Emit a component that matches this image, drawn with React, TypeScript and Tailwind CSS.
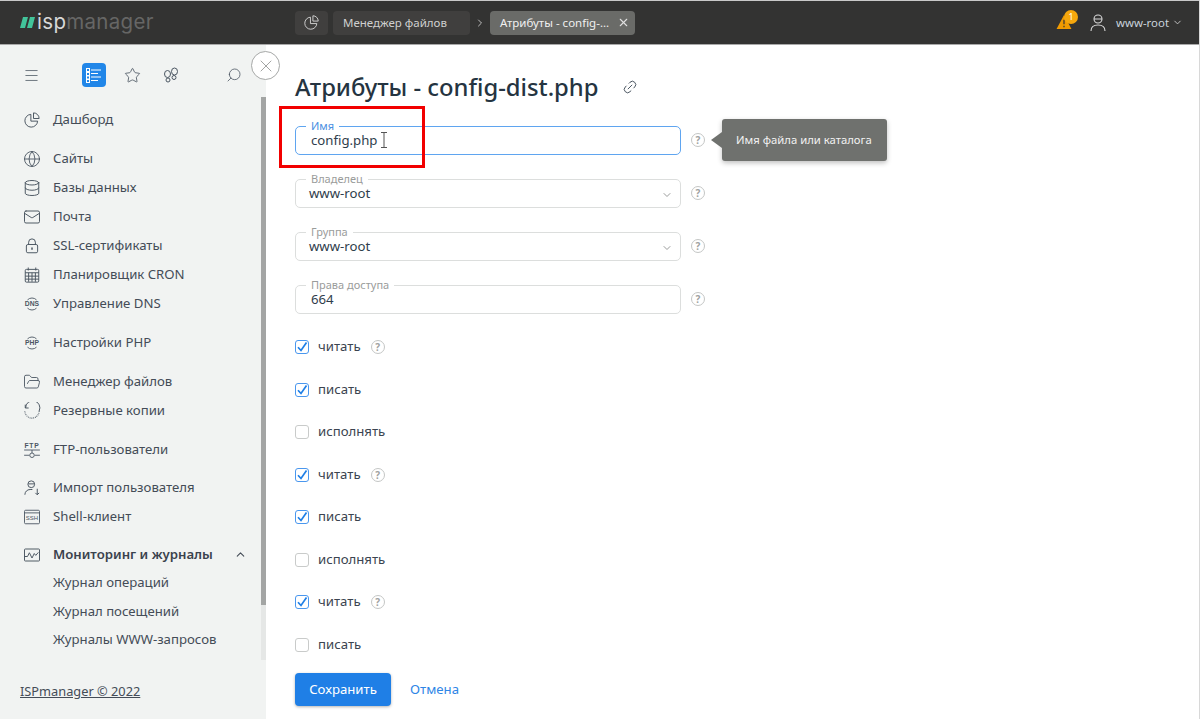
import React from "react";
import { X, ChevronDown, ChevronUp, ChevronRight, Search, Star, Menu, Globe, Database, Mail, FolderOpen, Link2 } from "lucide-react";

const S = ({ children, size = 22, cls = "" }: { children: React.ReactNode; size?: number; cls?: string }) => (
  <svg width={size} height={size} viewBox="0 0 24 24" fill="none" stroke="currentColor" strokeWidth={1.3} className={cls}>{children}</svg>
);

const Pie = ({ size = 18 }: { size?: number }) => (
  <S size={size}><path d="M10.5 4.5a8.5 8.5 0 1 0 9 9h-9z" /><path d="M14 2.5v7.5h7.5a7.5 7.5 0 0 0-7.5-7.5z" /></S>
);
const Lock = () => (
  <S size={18}><path d="M7.5 10V7a4.5 4.5 0 0 1 9 0v3" /><rect x="4.5" y="10" width="15" height="11" rx="2" /><path d="M12 14v3" strokeWidth={2} /></S>
);
const Cal = () => (
  <S size={18}><rect x="3" y="4.5" width="18" height="17" rx="1.5" /><path d="M7 2v4M17 2v4M3 9h18M7.5 9v12M12 9v12M16.5 9v12M3 13.5h18M3 17.5h18" /></S>
);
const Badge = ({ t }: { t: string }) => (
  <svg width="18" height="18" viewBox="0 0 24 24" fill="none" stroke="currentColor" strokeWidth={1.2}>
    <path d="M6 6.5a8.5 8.5 0 0 1 12 0M6 17.5a8.5 8.5 0 0 0 12 0" />
    <text x="12" y="15" textAnchor="middle" fontSize="9" fontWeight="700" fill="currentColor" stroke="none" fontFamily="'Liberation Sans',sans-serif">{t}</text>
  </svg>
);
const Backup = () => (
  <S size={18}><path d="M3.500 8A9.500 9.500 0 1 1 21.500 12" /><path d="M3 3.500V8h4.500" /><path d="M21.500 12a9.500 9.500 0 0 1-19 0" strokeWidth={1.4} strokeDasharray="1.200 1.200" /></S>
);
const Ftp = () => (
  <svg width="18" height="18" viewBox="0 0 24 24" fill="none" stroke="currentColor" strokeWidth={1.2}>
    <text x="12" y="9" textAnchor="middle" fontSize="9" fontWeight="700" fill="currentColor" stroke="none" letterSpacing="1" fontFamily="'Liberation Sans',sans-serif">FTP</text>
    <path d="M1.5 12h21M1.5 19h7M15.5 19h7M12 12v4" /><circle cx="12" cy="19" r="3" />
  </svg>
);
const UserImp = () => (
  <S size={18}><circle cx="11" cy="7" r="4.5" /><path d="M7 6.5h8M2.5 21c0-4 3-7 7-7h3M19 13v8M16.5 18.5 19 21l2.5-2.5" /></S>
);
const Ssh = () => (
  <svg width="18" height="18" viewBox="0 0 24 24" fill="none" stroke="currentColor" strokeWidth={1.2}>
    <rect x="2" y="3" width="20" height="18" rx="1.5" /><path d="M2 6.5h20" />
    <text x="12" y="16.5" textAnchor="middle" fontSize="8" fill="currentColor" stroke="none" fontFamily="'Liberation Sans',sans-serif">SSH</text>
  </svg>
);
const Mon = () => (
  <S size={18}><rect x="2" y="4" width="20" height="16" rx="1" /><path d="M2 14h4l2.5-5 3.5 7 3-6 2 2.5 3.500-4" /></S>
);

const nav: { t: string; i: React.ReactNode; mt?: string; b?: boolean }[] = [
  { t: "Дашборд", i: <Pie /> },
  { t: "Сайты", i: <Globe size={18} strokeWidth={1.2} />, mt: "mt-[10px]" },
  { t: "Базы данных", i: <Database size={18} strokeWidth={1.3} /> },
  { t: "Почта", i: <Mail size={18} strokeWidth={1.3} /> },
  { t: "SSL-сертификаты", i: <Lock /> },
  { t: "Планировщик CRON", i: <Cal /> },
  { t: "Управление DNS", i: <Badge t="DNS" /> },
  { t: "Настройки PHP", i: <Badge t="PHP" />, mt: "mt-[10px]" },
  { t: "Менеджер файлов", i: <FolderOpen size={18} strokeWidth={1.2} />, mt: "mt-[10px]" },
  { t: "Резервные копии", i: <Backup /> },
  { t: "FTP-пользователи", i: <Ftp />, mt: "mt-[10px]" },
  { t: "Импорт пользователя", i: <UserImp />, mt: "mt-[9px]" },
  { t: "Shell-клиент", i: <Ssh /> },
  { t: "Мониторинг и журналы", i: <Mon />, mt: "mt-[9px]", b: true },
];

const Help = () => (
  <span className="w-[14px] h-[14px] rounded-full border-[1.5px] border-[#c4c6c5] text-[#a0a2a1] text-[10px] leading-none font-bold flex items-center justify-center shrink-0">?</span>
);

const Field = ({ label, value, select, indent, mt }: { label: string; value: string; select?: boolean; indent: string; mt: string }) => (
  <div className={`flex items-center ${mt}`}>
    <div className={`relative w-[386px] h-[28.500px] rounded-[5px] border border-[#dcdedd] flex items-center ${indent}`}>
      <span className="absolute -top-[8px] left-[10px] px-[5px] bg-white text-[11px] leading-[14px] text-[#9a9c9b]">{label}</span>
      <span className="text-[13.200px] leading-[18px] text-[#2f3d4c]">{value}</span>
      {select && <ChevronDown size={12} className="absolute right-[7px] top-[9px] text-[#9a9c9b]" />}
    </div>
    <span className="ml-[10px]"><Help /></span>
  </div>
);

const Check = ({ label, on, help }: { label: string; on?: boolean; help?: boolean }) => (
  <div className="h-[42.500px] flex items-center">
    <span className={`w-[14px] h-[14px] rounded-[3px] border flex items-center justify-center shrink-0 ${on ? "border-[#4a97ee]" : "border-[#c9cbca]"}`}>
      {on && (
        <svg width="12" height="12" viewBox="0 0 12 12" fill="none" stroke="#1f7fe6" strokeWidth="1.7"><path d="M2 6.200 5 9.500 10.500 1.500" /></svg>
      )}
    </span>
    <span className="ml-[9px] text-[13.200px] text-[#3b4450]">{label}</span>
    {help && <span className="ml-[10px]"><Help /></span>}
  </div>
);

export default function App() {
  return (
    <div className="relative w-[1200px] h-[719px] overflow-hidden flex flex-col bg-white border-r border-[#d8d8d8]" style={{ fontFamily: "'Noto Sans','Open Sans',sans-serif" }}>
      <header className="h-[45px] shrink-0 bg-[#333332] border-t border-t-[#c9c9c9] border-b border-b-[#a9a9a9] flex items-center text-[#e4e4e4]">
        <div className="w-[295px] pl-[20px] flex items-center shrink-0">
          <svg width="15" height="11" viewBox="0 0 15 11"><path d="M3 0h5L5 11H0zM10 0h5l-3 11H7z" fill="#42c49a" /></svg>
          <span className="ml-[2px] text-[20.500px] leading-none tracking-[0.3px] text-[#d8d8d8]" style={{ fontFamily: "Inter,sans-serif" }}>isp<span className="text-[#666665]">manager</span></span>
        </div>
        <div className="w-[33px] h-[24px] rounded bg-[#403f3e] flex items-center justify-center text-[#d6d6d6]"><Pie size={17} /></div>
        <div className="ml-[5px] w-[137px] h-[24px] rounded bg-[#403f3e] flex items-center pl-[10px] text-[11.500px] text-[#cfcfcf]">Менеджер файлов</div>
        <ChevronRight size={12} className="mx-[4px] text-[#bdbdbd]" strokeWidth={2} />
        <div className="w-[145px] h-[24px] rounded bg-[#6a6b68] flex items-center pl-[10px] text-[11.500px] text-[#f0f0f0]">
          <span className="whitespace-nowrap">Атрибуты - config-...</span>
          <X size={13} className="ml-[8px] text-[#e0e0e0]" />
        </div>
        <div className="ml-auto flex items-center pr-[16px]">
          <div className="relative mr-[12px] w-[20px] h-[20px] flex items-start pt-[2px]">
            <svg width="16" height="14" viewBox="0 0 16 15"><path d="M8 0 16 15H0z" fill="#f09a00" /><path d="M8 5v5M8 11.500v1.500" stroke="#333" strokeWidth="1.300" /></svg>
            <span className="absolute -top-[3px] left-[8px] w-[14px] h-[14px] rounded-full bg-[#f5a70d] text-[9px] leading-[14px] text-center text-white">1</span>
          </div>
          <svg width="20" height="20" viewBox="0 0 20 20" fill="none" stroke="#d8d8d8" strokeWidth="1.100"><circle cx="10" cy="6" r="4" /><path d="M6 6h8M3 18c0-4 3-6 7-6s7 2 7 6" /></svg>
          <span className="ml-[8px] text-[11.400px] text-[#c9d3dc]">www-root</span>
          <ChevronDown size={11} className="ml-[3px] text-[#c9c9c9]" />
        </div>
      </header>

      <div className="flex flex-1 min-h-0">
        <aside className="relative w-[266px] shrink-0 bg-[#f1f3f2] flex flex-col text-[#444c57]">
          <div className="h-[60px] shrink-0 flex items-center pl-[23px] pr-[24px] text-[#4b5662]">
            <Menu size={17} strokeWidth={1.1} />
            <div className="ml-[42px] w-[24px] h-[24px] rounded-[4px] bg-[#2186e8] flex items-center justify-center">
              <svg width="16" height="15" viewBox="0 0 16 15" stroke="#fff" fill="none"><path d="M5 2h10M5 5.500h7M5 9h10M5 12.500h7" /><rect x="0.500" y="0.500" width="3" height="3" /><rect x="0.500" y="4.500" width="3" height="3" /><rect x="0.500" y="8" width="3" height="3" /><rect x="0.500" y="11.500" width="3" height="3" /></svg>
            </div>
            <Star size={17} strokeWidth={1.2} className="ml-[18px]" />
            <svg className="ml-[22px]" width="16" height="16" viewBox="0 0 16 16" fill="none" stroke="currentColor" strokeWidth="1"><ellipse cx="4.500" cy="7" rx="3" ry="3.500" /><circle cx="5" cy="13" r="2" /><ellipse cx="11.500" cy="4.500" rx="3" ry="3.500" /><circle cx="11" cy="10.500" r="2" /></svg>
            <Search size={16} strokeWidth={1.2} className="ml-auto -scale-x-100" />
          </div>

          <nav className="pl-[23px] pr-[25px] flex flex-col flex-1 min-h-0">
            {nav.map((n) => (
              <div key={n.t} className={`h-[29px] shrink-0 flex items-center ${n.mt ?? ""}`}>
                <span className="w-[18px] h-[18px] flex items-center justify-center shrink-0 text-[#4b5662]">{n.i}</span>
                <span className={`ml-[12px] text-[13.200px] whitespace-nowrap ${n.b ? "font-semibold text-[#3a424d]" : ""}`}>{n.t}</span>
                {n.b && <ChevronUp size={13} className="ml-auto -mr-[6px]" />}
              </div>
            ))}
            {["Журнал операций", "Журнал посещений", "Журналы WWW-запросов"].map((t) => (
              <div key={t} className="h-[28.500px] shrink-0 flex items-center pl-[30px] text-[13.200px] whitespace-nowrap">{t}</div>
            ))}
          </nav>
          <div className="h-[48px] shrink-0 pl-[20px] pt-[11px] text-[12.800px] underline text-[#444c57]">ISPmanager © 2022</div>

          <div className="absolute right-0 top-[52px] bottom-[59px] w-[5px] bg-[#e5e7e6]">
            <div className="h-[508px] bg-[#a3a5a4]" />
          </div>
          <button className="absolute -right-[14px] top-[6px] w-[29px] h-[29px] rounded-full border border-[#a6a8a7] bg-white flex items-center justify-center text-[#8f9190]">
            <X size={20} strokeWidth={1} />
          </button>
        </aside>

        <main className="relative flex-1 pl-[29px] pt-[26px]">
          <div className="flex items-center h-[32px]">
            <h1 className="text-[23.800px] leading-[32px] font-medium text-[#253441]">Атрибуты - config-dist.php</h1>
            <Link2 size={16} strokeWidth={1.3} className="ml-[23px] -rotate-45 text-[#3c4854]" />
          </div>

          <div className="mt-[23px]">
            <div className="flex items-center">
              <div className="relative w-[386px] h-[28.500px] rounded-[5px] border border-[#5fa5f0] flex items-center pl-[15px]">
                <span className="absolute -top-[8px] left-[10px] px-[5px] bg-white text-[11px] leading-[14px] text-[#4a90e2]">Имя</span>
                <span className="text-[13.200px] leading-[18px] text-[#2f3d4c]">config.php</span>
                <svg className="ml-[3px]" width="8" height="16" viewBox="0 0 8 16" fill="none" stroke="#555" strokeWidth="1"><path d="M1 .5h6M1 15.500h6M4 .5v15" /></svg>
              </div>
              <span className="ml-[10px]"><Help /></span>
            </div>
            <Field label="Владелец" value="www-root" select indent="pl-[13px]" mt="mt-[24.500px]" />
            <Field label="Группа" value="www-root" select indent="pl-[13px]" mt="mt-[24.500px]" />
            <Field label="Права доступа" value="664" indent="pl-[15px]" mt="mt-[24.500px]" />
          </div>

          <div className="mt-[12.500px]">
            <Check label="читать" on help />
            <Check label="писать" on />
            <Check label="исполнять" />
            <Check label="читать" on help />
            <Check label="писать" on />
            <Check label="исполнять" />
            <Check label="читать" on help />
            <Check label="писать" />
          </div>

          <div className="mt-[6.500px] flex items-center">
            <button className="w-[96px] h-[33px] rounded-[4px] bg-[#1f7fe6] text-white text-[13.200px] pt-[1px] shadow-[0_1px_3px_rgba(0,0,0,0.3)]">Сохранить</button>
            <span className="ml-[19px] text-[13.200px] pt-[2px] text-[#2f86e6]">Отмена</span>
          </div>

          <div className="absolute left-[13px] top-[61px] w-[146px] h-[62px] border-[3px] border-[#f20000]" />

          <div className="absolute left-[456px] top-[74px] w-[165px] h-[42px] rounded-[3px] bg-[#6f716e] shadow-[0_2px_5px_rgba(0,0,0,0.25)] flex items-center pl-[14px] text-[11.300px] text-[#f2f2f2]">
            <span className="absolute -left-[11px] top-[13px] w-0 h-0 border-y-[8px] border-y-transparent border-r-[11px] border-r-[#6f716e]" />
            Имя файла или каталога
          </div>
        </main>
      </div>
    </div>
  );
}
